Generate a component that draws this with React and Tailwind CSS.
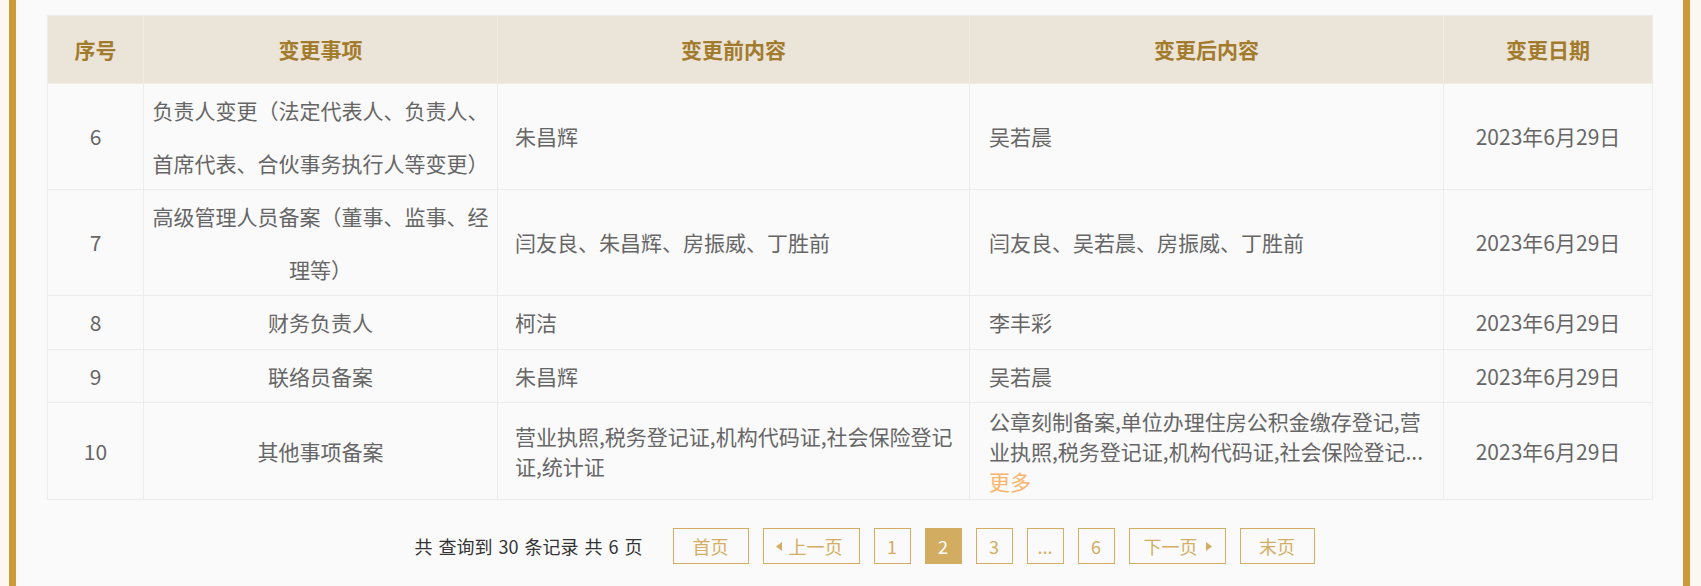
import React from 'react';

const rows = [
  {
    no: 6,
    item: '负责人变更（法定代表人、负责人、首席代表、合伙事务执行人等变更）',
    before: '朱昌辉',
    after: '吴若晨',
    date: '2023年6月29日',
  },
  {
    no: 7,
    item: '高级管理人员备案（董事、监事、经理等）',
    before: '闫友良、朱昌辉、房振威、丁胜前',
    after: '闫友良、吴若晨、房振威、丁胜前',
    date: '2023年6月29日',
  },
  { no: 8, item: '财务负责人', before: '柯洁', after: '李丰彩', date: '2023年6月29日' },
  { no: 9, item: '联络员备案', before: '朱昌辉', after: '吴若晨', date: '2023年6月29日' },
  {
    no: 10,
    item: '其他事项备案',
    before: '营业执照,税务登记证,机构代码证,社会保险登记证,统计证',
    after: '公章刻制备案,单位办理住房公积金缴存登记,营业执照,税务登记证,机构代码证,社会保险登记证,统计证',
    afterLines: ['公章刻制备案,单位办理住房公积金缴存登记,营', '业执照,税务登记证,机构代码证,社会保险登记...'],
    date: '2023年6月29日',
  },
];

const pageBtn =
  'h-[36px] flex items-center justify-center border border-[#d4ad62] text-[#d4ad62] text-[18px] leading-none';

const App = () => {
  return (
    <div
      className="w-full h-[586px] bg-[#fbf8f1] pl-[9px] pr-[11px] overflow-hidden"
      style={{ fontFamily: '"Noto Sans CJK SC", "Noto Sans", sans-serif' }}
    >
      <div className="h-full border-x-[7px] border-[#cc9a38] bg-[#fafafa] px-[31px] pt-[15px]">
        <table className="w-full table-fixed border-collapse text-[21px] text-[#666]">
          <colgroup>
            <col className="w-[96px]" />
            <col className="w-[354px]" />
            <col className="w-[472px]" />
            <col className="w-[474px]" />
            <col className="w-[209px]" />
          </colgroup>
          <thead>
            <tr className="bg-[#ebe4d9] h-[68px] text-[#a37b2c] font-bold">
              <th className="border border-[#f1ece4] border-t-[#ececec]">序号</th>
              <th className="border border-[#f1ece4] border-t-[#ececec]">变更事项</th>
              <th className="border border-[#f1ece4] border-t-[#ececec]">变更前内容</th>
              <th className="border border-[#f1ece4] border-t-[#ececec]">变更后内容</th>
              <th className="border border-[#f1ece4] border-t-[#ececec]">变更日期</th>
            </tr>
          </thead>
          <tbody>
            {rows.map((r) => (
              <tr key={r.no} className="leading-[52.5px]">
                <td className="border border-[#ececec] text-center">{r.no}</td>
                <td className="border border-[#ececec] text-center px-[8px]">{r.item}</td>
                <td className="border border-[#ececec] pl-[17px] pr-[12px]">
                  {r.afterLines ? <div className="leading-[30px]">{r.before}</div> : r.before}
                </td>
                <td className="border border-[#ececec] pl-[19px] pr-[12px]">
                  {r.afterLines ? (
                    <div className="leading-[30px] py-[3px]" title={r.after}>
                      {r.afterLines.map((l) => (
                        <div key={l} className="whitespace-nowrap">{l}</div>
                      ))}
                      <a className="text-[#fbb469] cursor-pointer">更多</a>
                    </div>
                  ) : (
                    r.after
                  )}
                </td>
                <td className="border border-[#ececec] text-center">{r.date}</td>
              </tr>
            ))}
          </tbody>
        </table>

        {/* pagination */}
        <div className="flex items-center justify-center pl-[30px] mt-[28px] gap-[14px]">
          <span className="text-[18px] text-[#333] mr-[16px] [word-spacing:2px]">共 查询到 30 条记录 共 6 页</span>
          <a className={`${pageBtn} w-[76px]`}>首页</a>
          <a className={`${pageBtn} w-[97px] !justify-start pl-[12px] gap-[7px]`}>
            <svg width="6" height="9" viewBox="0 0 6 9">
              <polygon points="6,0 6,9 0,4.5" fill="#d4ad62" />
            </svg>
            上一页
          </a>
          <a className={`${pageBtn} w-[37px]`}>1</a>
          <a className="h-[36px] w-[37px] flex items-center justify-center bg-[#d2ac61] text-white text-[18px] leading-none">2</a>
          <a className={`${pageBtn} w-[37px]`}>3</a>
          <a className={`${pageBtn} w-[37px]`}>...</a>
          <a className={`${pageBtn} w-[37px]`}>6</a>
          <a className={`${pageBtn} w-[97px] !justify-start pl-[14px] gap-[8px]`}>
            下一页
            <svg width="6" height="9" viewBox="0 0 6 9">
              <polygon points="0,0 0,9 6,4.5" fill="#d4ad62" />
            </svg>
          </a>
          <a className={`${pageBtn} w-[75px]`}>末页</a>
        </div>
      </div>
    </div>
  );
};

export default App;
